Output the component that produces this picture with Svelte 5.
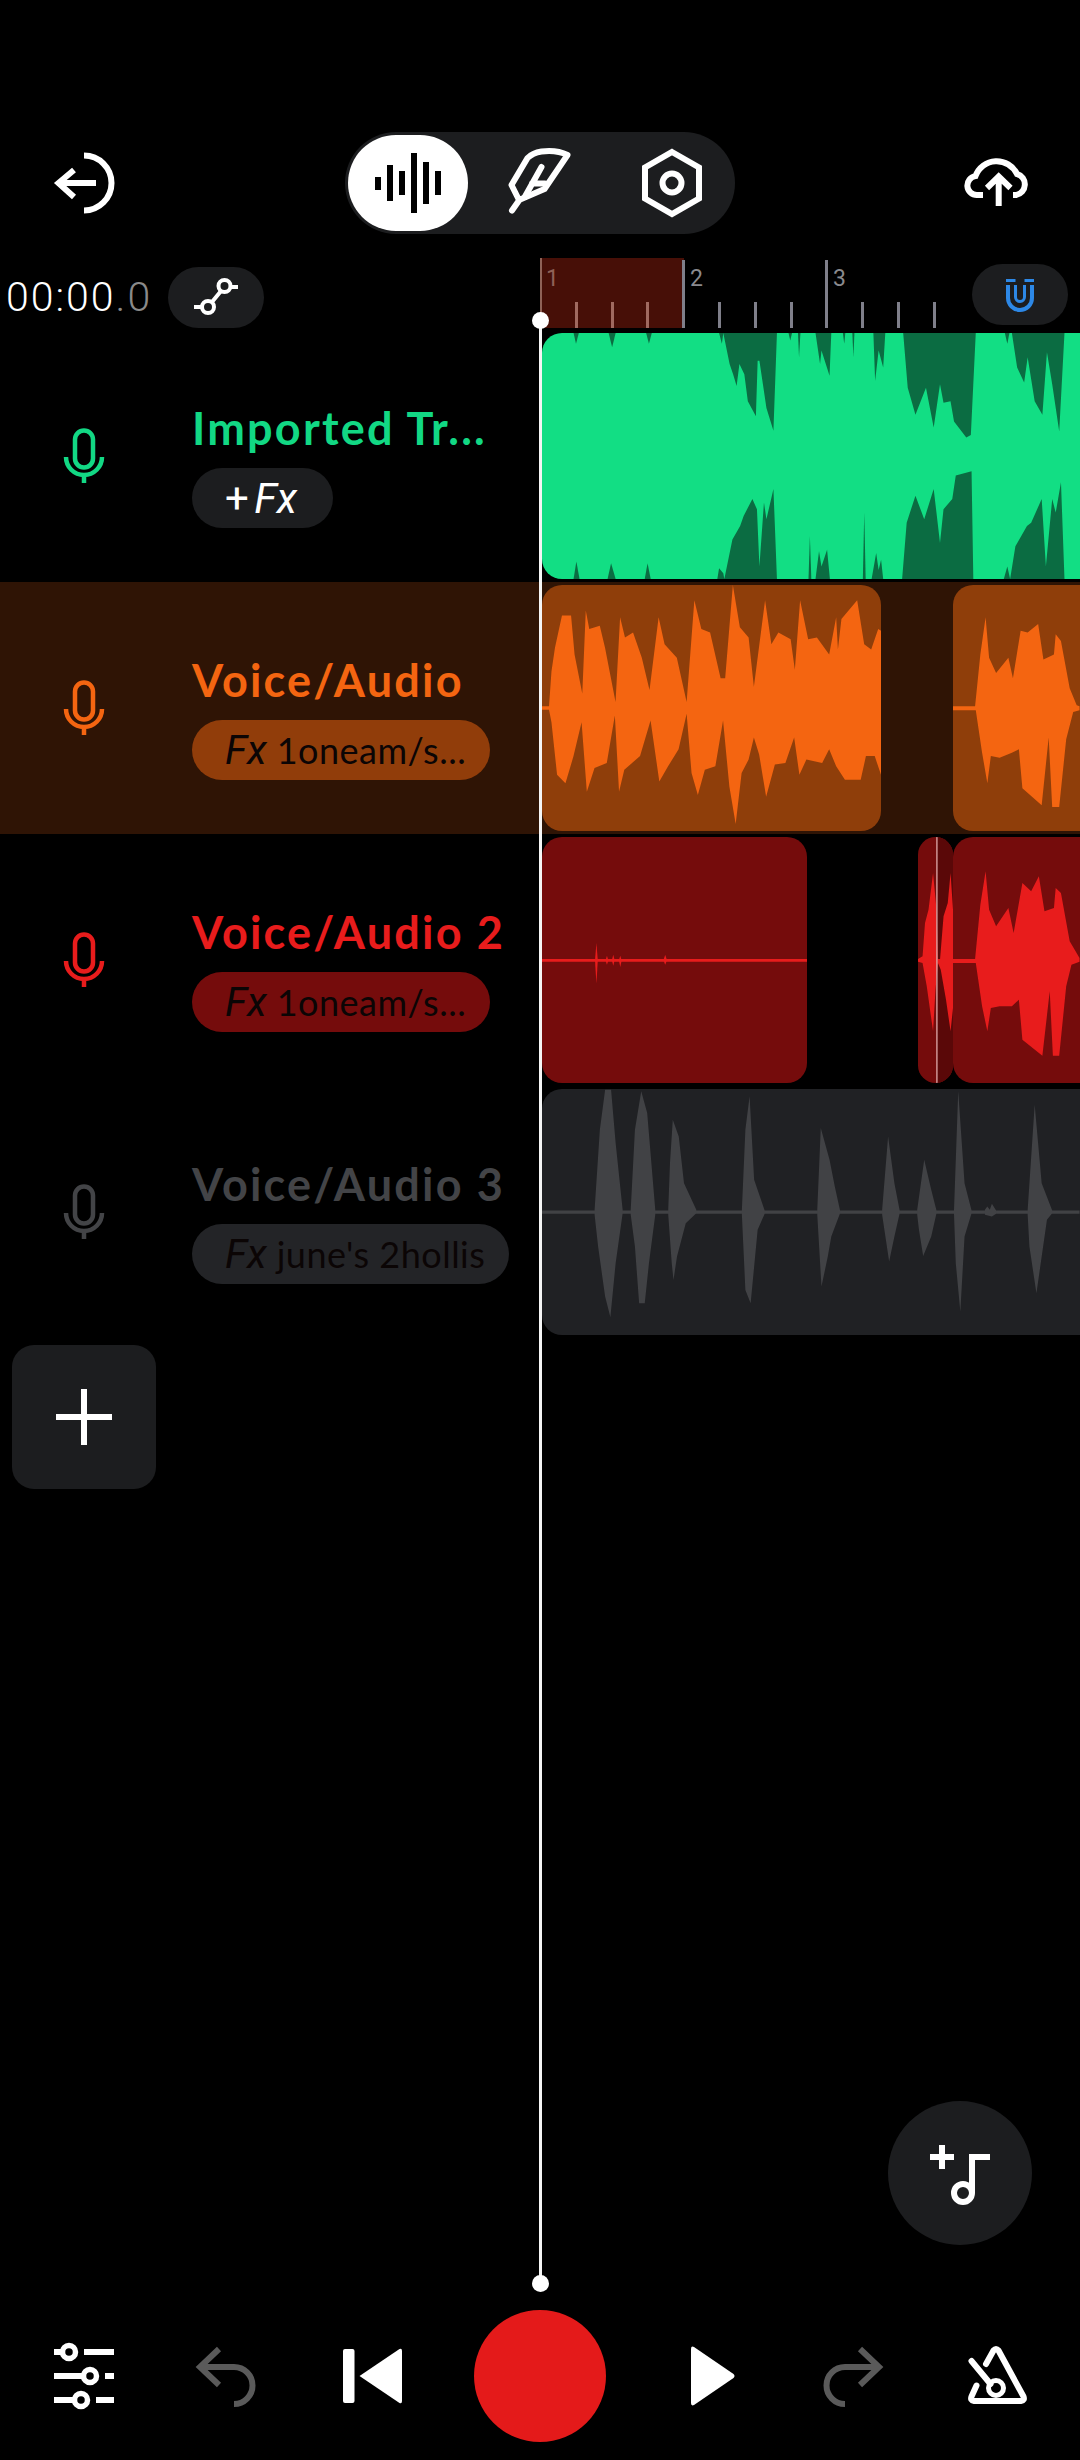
<script>
  const green = { name: '#12d884', bg: '#1c1d1f', wave: '#12de84', clip: '#0b6c42' }

  const greenDark = [
    '125,38 132,70 140,38', '225,38 235,80 245,38', '332,38 340,70 348,38',
    '540,38 548,70 552,38 570,130 580,160 590,195 598,130 612,160 622,240 645,285 650,120 655,120 665,190 675,260 695,328 705,38',
    '738,38 743,60 748,38', '765,38 768,110 772,38', '815,38 828,130 832,90 855,165 860,38', '893,38 897,70 900,38', '920,38 923,110 926,38',
    '980,38 985,180 995,90 1008,140 1014,38',
    '1065,38 1078,200 1100,280 1130,200 1152,318 1170,190 1180,245 1200,240 1210,300 1245,348 1258,340 1272,38',
    '1355,38 1362,70 1368,38',
    '1375,38 1390,140 1410,185 1420,110 1440,240 1462,280 1475,95 1490,190 1510,330 1525,38',
    '125,767 133,715 142,767', '222,767 232,720 245,767', '328,767 336,720 345,767',
    '535,767 540,735 552,750 555,767 578,650 600,610 610,580 635,530 648,560 655,730 668,540 675,590 695,500 705,767',
    '795,767 799,640 803,767', '815,767 825,685 832,730 848,680 856,767', '950,767 954,570 958,767', '975,767 988,690 995,740 1002,710 1008,767',
    '1062,767 1075,600 1100,520 1125,590 1152,500 1170,660 1180,560 1205,530 1215,460 1260,448 1265,767',
    '1352,767 1362,730 1370,767 1385,670 1418,610 1430,600 1460,530 1472,730 1490,530 1500,570 1515,480 1525,767'
  ]

  const orangeA = '35,1143 55,1143 62,1040 72,970 92,875 118,875 128,990 150,1105 160,860 170,915 200,905 215,970 245,1130 258,880 272,940 295,925 320,1000 342,1095 368,880 385,960 420,1000 448,1130 470,830 490,915 515,925 545,1060 558,1060 580,785 600,910 625,940 640,1085 672,830 690,960 710,925 745,945 757,1035 772,830 795,945 820,940 855,990 875,880 880,975 890,885 935,830 955,960 975,975 995,915 1003,920 1003,1345 985,1290 960,1290 945,1360 900,1360 875,1320 855,1270 835,1310 790,1300 770,1345 755,1235 730,1310 700,1315 675,1410 655,1285 640,1235 625,1300 605,1340 588,1490 570,1380 552,1185 530,1320 500,1330 480,1405 462,1340 448,1165 425,1270 395,1320 370,1365 345,1185 315,1290 270,1330 255,1395 243,1170 220,1310 185,1325 163,1395 148,1190 125,1290 102,1370 78,1345 62,1190 55,1153 35,1153'
  const orangeB = '1207,1143 1270,1143 1285,990 1300,880 1310,1000 1330,1045 1365,1000 1378,1060 1400,920 1420,925 1450,900 1465,1005 1495,990 1500,930 1515,950 1540,1090 1560,1140 1568,1143 1568,1155 1550,1160 1530,1240 1510,1440 1490,1440 1480,1235 1460,1435 1405,1385 1395,1270 1375,1280 1340,1295 1315,1290 1305,1370 1290,1280 1272,1155 1207,1155'

  const redLine = [
    '35,388 790,388 790,396 35,396',
    '186,392 190,340 194,392 190,462', '216,392 220,378 224,392 220,405', '234,392 238,375 242,392 238,408',
    '254,392 258,378 262,392 258,412', '381,392 386,375 391,392 386,405'
  ]
  const redSliver = '1105,388 1118,380 1125,280 1135,240 1148,130 1158,240 1162,388 1168,388 1178,260 1190,220 1198,130 1205,240 1205,535 1198,605 1185,510 1170,420 1162,400 1155,480 1148,605 1130,470 1118,400 1105,396'
  const redB = '1207,388 1270,388 1285,225 1300,125 1310,240 1330,290 1365,235 1380,310 1405,160 1430,185 1452,140 1468,245 1495,235 1500,175 1515,190 1540,335 1568,385 1568,396 1545,405 1530,470 1510,678 1492,678 1483,485 1462,678 1405,630 1395,510 1375,530 1340,530 1315,535 1305,605 1290,530 1272,400 1207,400'

  const greySpikes = [
    '35,1142 1568,1142 1568,1152 35,1152',
    '185,1140 200,900 215,780 232,780 245,940 265,1140 265,1150 245,1300 230,1462 215,1400 195,1250 185,1155',
    '288,1140 300,900 318,785 335,850 358,1140 358,1155 340,1300 328,1420 312,1420 300,1250 288,1155',
    '395,1140 400,1000 408,870 425,920 440,1060 475,1140 475,1150 445,1180 420,1280 410,1350 405,1300 395,1155',
    '605,1140 615,900 627,800 640,1050 670,1142 670,1152 650,1200 630,1420 615,1380 605,1155',
    '820,1140 830,895 855,990 870,1070 885,1142 885,1150 860,1220 850,1280 832,1370 820,1155',
    '1005,1140 1022,920 1040,1060 1055,1142 1055,1150 1040,1220 1025,1295 1005,1155',
    '1105,1140 1125,990 1145,1080 1160,1142 1160,1150 1145,1220 1122,1278 1110,1200 1105,1155',
    '1210,1140 1222,785 1240,1060 1260,1142 1260,1150 1240,1220 1228,1445 1215,1300 1210,1155',
    '1298,1140 1305,1130 1312,1140 1318,1122 1330,1142 1330,1152 1318,1160 1298,1155',
    '1420,1140 1440,825 1460,1060 1490,1142 1490,1150 1475,1170 1445,1390 1425,1250 1420,1155'
  ]

  const tracks = [
    {
      name: 'Imported Tr...', color: green.name, pill: '#1c1d1f', fx: '', tone: 'first',
      clips: [{ left: 2, width: 560, bleed: true, bg: '#12de84', view: '35 38 1597 729', shapes: greenDark.map((points) => ({ points, fill: '#0b6c42' })) }]
    },
    {
      name: 'Voice/Audio', color: '#f46511', pill: '#913d0a', fx: '1oneam/s...', active: true,
      clips: [
        { left: 2, width: 339, bg: '#8f3e0a', view: '35 785 968 726', shapes: [{ points: orangeA, fill: '#f46511' }] },
        { left: 413, width: 150, bleed: true, bg: '#8f3e0a', view: '1207 785 428 726', shapes: [{ points: orangeB, fill: '#f46511' }] }
      ]
    },
    {
      name: 'Voice/Audio 2', color: '#e81c1c', pill: '#750c0c', fx: '1oneam/s...',
      clips: [
        { left: 2, width: 265, bg: '#750c0c', view: '35 22 755 738', shapes: redLine.map((points) => ({ points, fill: '#e81c1c' })) },
        {
          left: 378, width: 35, bg: '#750c0c', view: '1105 22 100 738',
          shapes: [
            { points: '1158,22 1205,22 1205,760 1158,760', fill: '#5a0808' },
            { points: redSliver, fill: '#e81c1c' },
            { points: '1157,22 1161,22 1161,760 1157,760', fill: '#d9a0a0' }
          ]
        },
        { left: 413, width: 150, bleed: true, bg: '#750c0c', view: '1207 22 428 738', shapes: [{ points: redB, fill: '#e81c1c' }] }
      ]
    },
    {
      name: 'Voice/Audio 3', color: '#434447', pill: '#232427', fx: "june's 2hollis",
      clips: [{ left: 2, width: 560, bleed: true, bg: '#202124', view: '35 778 1597 737', shapes: greySpikes.map((points) => ({ points, fill: '#414245' })) }]
    }
  ]

  const ticks = Array.from({ length: 11 }, (_, i) => i + 1)
</script>

<div class="screen">
  <header class="topbar">
    <svg class="back" viewBox="50 148 70 70" fill="none" stroke="#fff" stroke-width="6">
      <path d="M84 155.500a27.500 27.500 0 0 1 0 55" />
      <path d="M96 183H59M74 170l-15.500 13L74 197" />
    </svg>
    <nav class="modes">
      <span class="mode on">
        <svg viewBox="372 148 72 70" fill="#000">
          <rect x="375" y="177" width="6" height="13" /><rect x="387" y="165" width="6" height="36" />
          <rect x="399" y="171" width="6" height="24" /><rect x="411" y="153" width="6" height="60" />
          <rect x="423" y="162" width="6" height="42" /><rect x="435" y="171" width="6" height="24" />
        </svg>
      </span>
      <span class="mode">
        <svg viewBox="504 148 72 70" fill="none" stroke="#fff" stroke-width="6" stroke-linecap="round" stroke-linejoin="round">
          <path d="M512 210.500l7-10M519 200l-7.500-15 16-27c4-4 8-5.500 14-6.500 8-1 18-.5 26 3.500l-23 34-25.500 11z" />
          <path d="M541.500 167L525 196.500M532 183.500h13" />
        </svg>
      </span>
      <span class="mode">
        <svg viewBox="636 148 72 70" fill="none" stroke="#fff" stroke-width="6">
          <path d="M672 152l27 15.500v31L672 214l-27-15.500v-31z" />
          <circle cx="672" cy="183" r="9.500" />
        </svg>
      </span>
    </nav>
    <svg class="cloud" viewBox="960 150 72 62" fill="none" stroke="#fff" stroke-width="6">
      <path d="M980 196h-6a9.500 9.500 0 0 1-1.500-18.900A22.500 22.500 0 0 1 1014 175a10.800 10.800 0 0 1-1 21h-3" />
      <path d="M995.700 207v-28M984 189l11.700-11.500L1007.500 189" />
    </svg>
  </header>

  <div class="timebar">
    <div class="clock">
      <span class="time">00:00<i>.0</i></span>
      <span class="chip">
        <svg viewBox="190 270 52 48" fill="none" stroke="#fff" stroke-width="4">
          <circle cx="208" cy="304" r="6" /><circle cx="224.500" cy="283" r="6" />
          <path d="M194 304h8M212 299l9-11M230 284h8" />
        </svg>
      </span>
    </div>
    <div class="ruler">
      <div class="loop"></div>
      {#each ticks as t}
        <span class="tick" class:major={t % 4 === 0} class:inloop={t < 4}></span>
      {/each}
      <b class="bar one">1</b><b class="bar two">2</b><b class="bar three">3</b>
      <span class="chip magnet">
        <svg viewBox="1000 272 42 46" fill="none" stroke="#2d88e6">
          <path d="M1007 280.500h9.500M1025.500 280.500h9.500" stroke-width="3" />
          <path d="M1009 285v13a12 12 0 0 0 24 0v-13" stroke-width="4" />
          <path d="M1016.500 285v12a4.500 4.500 0 0 0 9 0v-12" stroke-width="3" />
        </svg>
      </span>
    </div>
  </div>

  <main class="tracks">
    {#each tracks as track}
      <section class="track" class:active={track.active}>
        <div class="head" style="color: {track.color}">
          <svg class="mic" viewBox="60 424 48 64" fill="none" stroke="currentColor" stroke-width="4.500">
            <rect x="75" y="430.500" width="18" height="37" rx="9" />
            <path d="M66 457a18 18 0 0 0 36 0M84 475v8" />
          </svg>
          <div class="info">
            <h2>{track.name}</h2>
            <span class="fx" class:empty={!track.fx} style="background: {track.pill}">
              {#if track.fx}
                <em>Fx</em><span class="preset">{track.fx}</span>
              {:else}
                <span class="plus">+</span><em>Fx</em>
              {/if}
            </span>
          </div>
        </div>
        <div class="lane">
          {#each track.clips as clip}
            <div class="clip" class:bleed={clip.bleed} style="left: {clip.left}px; width: {clip.width}px; background: {clip.bg}">
              <svg viewBox={clip.view} preserveAspectRatio="none">
                {#each clip.shapes as s}
                  <polygon points={s.points} fill={s.fill} />
                {/each}
              </svg>
            </div>
          {/each}
        </div>
      </section>
    {/each}
    <button class="add" aria-label="Add track">
      <svg viewBox="0 0 56 56" fill="none" stroke="#fff" stroke-width="6"><path d="M28 0v56M0 28h56" /></svg>
    </button>
  </main>

  <footer class="transport">
    <svg viewBox="48 2340 72 72" fill="none" stroke="#fff" stroke-width="6">
      <path d="M54 2352h8M84 2352h30M54 2376h30M105 2376h9M54 2400h20M96 2400h18" />
      <g stroke-width="5.500"><circle cx="69" cy="2352" r="6.500" /><circle cx="90" cy="2376" r="6.500" /><circle cx="81" cy="2400" r="6.500" /></g>
    </svg>
    <svg viewBox="190 2340 72 72" fill="none" stroke="#5a5a5a" stroke-width="6">
      <path d="M219 2349l-19 18 19 18M200 2367h34a18.500 18.500 0 0 1 0 37" />
    </svg>
    <svg viewBox="332 2340 72 72" fill="#fff">
      <rect x="343" y="2349" width="11.500" height="54" rx="2" />
      <path d="M359.500 2376l40-27q2.500-1 2.500 2v50q0 3-2.500 2z" />
    </svg>
    <span class="record"></span>
    <svg viewBox="676 2340 72 72" fill="#fff">
      <path d="M691 2349q0-3.500 3-2l39.500 27q2 2 0 4L694 2405q-3 1.500-3-2z" />
    </svg>
    <svg viewBox="818 2340 72 72" fill="none" stroke="#5a5a5a" stroke-width="6">
      <path d="M860 2349l19 18-19 18M879 2367h-34a18.500 18.500 0 0 0 0 37" />
    </svg>
    <svg viewBox="960 2340 72 72" fill="none" stroke="#fff" stroke-width="6" stroke-linecap="round" stroke-linejoin="round">
      <path d="M986 2364l7.500-13.500q2.500-3 5 0l25 46q1.500 4-2.500 4.500h-47q-4-.5-2.500-4.500l5-11" />
      <path d="M971.500 2361l19 23" />
      <circle cx="996" cy="2388" r="7.500" stroke-width="5" />
    </svg>
  </footer>

  <div class="playhead"></div>

  <button class="fab" aria-label="Add sound">
    <svg viewBox="920 2130 80 80" fill="none" stroke="#fff" stroke-width="6">
      <path d="M930 2154h24M942 2142v24M990 2154h-18v36" />
      <circle cx="963" cy="2190" r="9" />
    </svg>
  </button>
</div>

<style>
  :global(body) {
    background: #000;
  }

  .screen {
    position: relative;
    width: 1080px;
    height: 2460px;
    overflow: hidden;
    background: #000;
    display: flex;
    flex-direction: column;
    font-family: 'Lato', sans-serif;
    color: #fff;
  }

  svg {
    display: block;
  }

  .topbar {
    display: grid;
    grid-template-columns: 345px 390px 1fr;
    align-items: center;
    height: 102px;
    margin-top: 132px;
  }

  .back {
    width: 70px;
    height: 70px;
    margin-left: 50px;
  }

  .cloud {
    width: 72px;
    height: 62px;
    margin-left: 228px;
    margin-top: -6px;
  }

  .modes {
    height: 102px;
    display: flex;
    align-items: center;
    background: #1c1d1f;
    border-radius: 51px;
    padding: 0 3px;
    box-sizing: border-box;
  }

  .mode {
    flex: none;
    width: 120px;
    height: 96px;
    border-radius: 48px;
    display: flex;
    align-items: center;
    justify-content: center;
  }

  .mode + .mode {
    width: 132px;
  }

  .mode.on {
    background: #fff;
    margin-right: 6px;
  }

  .mode svg {
    width: 72px;
    height: 70px;
  }

  .timebar {
    display: flex;
    height: 72px;
    margin-top: 24px;
  }

  .clock {
    width: 540px;
    display: flex;
    align-items: center;
    padding: 6px 0 0 6px;
    box-sizing: border-box;
    gap: 15px;
  }

  .time {
    font-family: 'Roboto', sans-serif;
    font-weight: 300;
    font-size: 41px;
    letter-spacing: 2px;
    width: 147px;
    white-space: nowrap;
  }

  .time i {
    font-style: normal;
    color: #8a8a8a;
  }

  .chip {
    width: 96px;
    height: 61px;
    border-radius: 31px;
    background: #1c1d1f;
    display: flex;
    align-items: center;
    justify-content: center;
  }

  .chip svg {
    width: 52px;
    height: 48px;
  }

  .ruler {
    position: relative;
    flex: 1;
    display: flex;
    align-items: flex-end;
    height: 70px;
    box-sizing: border-box;
  }

  .loop {
    position: absolute;
    left: 0;
    top: 0;
    width: 144px;
    height: 70px;
    background: #470f07;
    border-left: 2px solid #8f6257;
    box-sizing: border-box;
  }

  .tick {
    position: relative;
    width: 35.800px;
    height: 26px;
    flex: none;
  }

  .tick::after {
    content: '';
    position: absolute;
    right: -2px;
    bottom: 0;
    width: 3px;
    height: 100%;
    background: #7f7f8a;
  }

  .tick.inloop::after {
    background: #a06a60;
  }

  .tick.major {
    height: 68px;
  }

  .bar {
    position: absolute;
    top: 7px;
    font-family: 'Roboto', sans-serif;
    font-weight: 400;
    font-size: 23px;
    color: #8a8a8e;
  }

  .one { left: 6px; color: #8f6257; }
  .two { left: 150px; }
  .three { left: 293px; }

  .magnet {
    position: absolute;
    left: 432px;
    top: 6px;
  }

  .magnet svg {
    width: 42px;
    height: 46px;
  }

  .track {
    display: flex;
    height: 252px;
  }

  .track.active {
    background: #2f1405;
  }

  .head {
    width: 540px;
    flex: none;
    display: flex;
    align-items: center;
    padding-left: 60px;
    box-sizing: border-box;
  }

  .mic {
    width: 48px;
    height: 64px;
    flex: none;
    margin-right: 84px;
  }

  .info {
    align-self: flex-start;
    margin-top: 70px;
  }

  h2 {
    margin: 0 0 12px;
    font-size: 45px;
    line-height: 56px;
    font-weight: 700;
    letter-spacing: 2.200px;
    white-space: nowrap;
  }

  .fx {
    display: inline-flex;
    align-items: center;
    gap: 10px;
    height: 60px;
    padding: 0 24px 0 33px;
    border-radius: 30px;
    color: #0b0505;
    font-size: 36px;
    letter-spacing: .5px;
    white-space: pre;
  }

  .fx.empty {
    color: #fff;
    gap: 5px;
    padding-right: 36px;
  }

  .fx em {
    font-family: 'Roboto', sans-serif;
    font-weight: 400;
    font-size: 41px;
    letter-spacing: 0;
  }

  .fx.empty em {
    font-size: 42px;
  }

  .plus {
    font-family: 'Roboto', sans-serif;
    font-weight: 400;
    font-size: 42px;
  }

  .lane {
    position: relative;
    flex: 1;
    overflow: hidden;
  }

  .clip {
    position: absolute;
    top: 3px;
    height: 246px;
    border-radius: 20px;
    overflow: hidden;
  }

  .clip.bleed {
    border-radius: 20px 0 0 20px;
  }

  .clip svg {
    width: 100%;
    height: 100%;
  }

  .add {
    display: flex;
    align-items: center;
    justify-content: center;
    width: 144px;
    height: 144px;
    margin: 7px 0 0 12px;
    padding: 0;
    border: 0;
    border-radius: 22px;
    background: #1c1d1f;
  }

  .add svg {
    width: 56px;
    height: 56px;
  }

  .transport {
    margin-top: auto;
    display: flex;
    justify-content: space-between;
    align-items: center;
    padding: 0 48px 18px;
  }

  .transport svg {
    width: 72px;
    height: 72px;
  }

  .record {
    width: 132px;
    height: 132px;
    border-radius: 50%;
    background: #e41a1a;
  }

  .playhead {
    position: absolute;
    left: 539px;
    top: 320px;
    width: 3px;
    height: 1964px;
    background: #f5f5f5;
  }

  .playhead::before,
  .playhead::after {
    content: '';
    position: absolute;
    left: -7px;
    width: 17px;
    height: 17px;
    border-radius: 50%;
    background: #fff;
  }

  .playhead::before {
    top: -8px;
  }

  .playhead::after {
    bottom: -8px;
  }

  .fab {
    position: absolute;
    left: 888px;
    top: 2101px;
    width: 144px;
    height: 144px;
    padding: 32px;
    border: 0;
    border-radius: 50%;
    background: #1c1d1f;
  }

  .fab svg {
    width: 80px;
    height: 80px;
  }
</style>
